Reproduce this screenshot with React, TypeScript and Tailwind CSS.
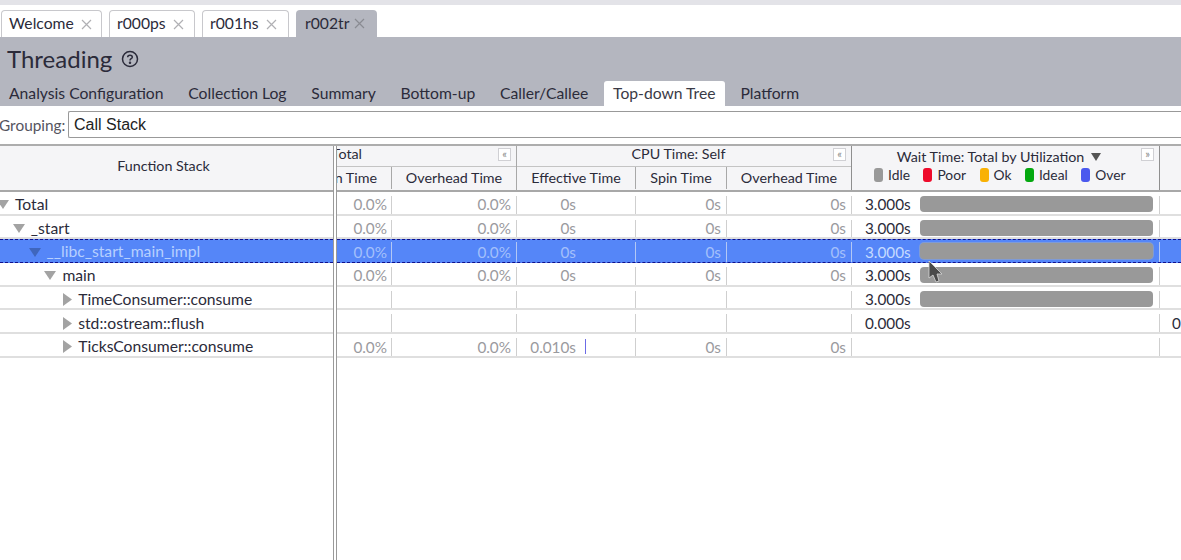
import { ReactNode } from "react";

const topTabs = [
  { label: "Welcome", width: "w-[101px]" },
  { label: "r000ps", width: "w-[86px]" },
  { label: "r001hs", width: "w-[87px]" },
];

const viewTabs = ["Analysis Configuration", "Collection Log", "Summary", "Bottom-up", "Caller/Callee", "Top-down Tree", "Platform"];

const legend = [
  { label: "Idle", color: "bg-[#999999]" },
  { label: "Poor", color: "bg-[#ee0b2b]" },
  { label: "Ok", color: "bg-[#f9b104]" },
  { label: "Ideal", color: "bg-[#04a80f]" },
  { label: "Over", color: "bg-[#4a58ee]" },
];

const rows = [
  { name: "Total", depth: 0, open: true, pct: true, eff: "0s", spin: "0s", over: "0s", wait: "3.000s", bar: true },
  { name: "_start", depth: 1, open: true, pct: true, eff: "0s", spin: "0s", over: "0s", wait: "3.000s", bar: true },
  { name: "__libc_start_main_impl", depth: 2, open: true, pct: true, eff: "0s", spin: "0s", over: "0s", wait: "3.000s", bar: true, selected: true },
  { name: "main", depth: 3, open: true, pct: true, eff: "0s", spin: "0s", over: "0s", wait: "3.000s", bar: true },
  { name: "TimeConsumer::consume", depth: 4, open: false, pct: false, eff: "", spin: "", over: "", wait: "3.000s", bar: true },
  { name: "std::ostream::flush", depth: 4, open: false, pct: false, eff: "", spin: "", over: "", wait: "0.000s", bar: false, next: "0" },
  { name: "TicksConsumer::consume", depth: 4, open: false, pct: true, eff: "0.010s", spin: "0s", over: "0s", wait: "", bar: false, tick: true },
];

function Tri({ open, selected }: { open: boolean; selected?: boolean }) {
  const fill = selected ? "#3f66bd" : "#a3a3a3";
  return open ? (
    <svg width="12" height="9" viewBox="0 0 12 9" className="shrink-0">
      <path d="M0 0H12L6 9Z" fill={fill} />
    </svg>
  ) : (
    <svg width="9" height="13" viewBox="0 0 9 13" className="shrink-0">
      <path d="M0 0L9 6.500L0 13Z" fill={fill} />
    </svg>
  );
}

function CloseX({ color }: { color: string }) {
  return (
    <svg width="11" height="11" viewBox="0 0 11 11" stroke={color} strokeWidth="1.200" className="shrink-0">
      <path d="M1 1L10 10M10 1L1 10" />
    </svg>
  );
}

function CollapseBtn({ dir }: { dir: string }) {
  return (
    <span className="absolute right-[5px] top-[2px] flex h-[13px] w-[13px] items-center justify-center border border-[#d0d0d4] bg-white pb-[2px] text-[11px] leading-none text-[#888888]">
      {dir}
    </span>
  );
}

function Cell({ className, children }: { className: string; children?: ReactNode }) {
  return <div className={`flex h-full shrink-0 items-center overflow-hidden ${className}`}>{children}</div>;
}

export default function App() {
  return (
    <div className="relative h-[560px] w-[1181px] overflow-hidden bg-white font-['Lato',sans-serif] text-[#2b2b3a]">
      <div className="h-[5px] bg-[#e3e3e8]" />

      {/* result tabs */}
      <div className="flex h-[32px] items-end gap-[7px] pl-[1px]">
        {topTabs.map((t) => (
          <div key={t.label} className={`flex h-[27px] items-center gap-[7px] rounded-t-[4px] border border-b-0 border-[#c8c8cc] bg-white pl-[7px] text-[15.700px] ${t.width}`}>
            {t.label}
            <CloseX color="#b0b0b4" />
          </div>
        ))}
        <div className="flex h-[27px] w-[81px] items-center gap-[5px] rounded-t-[4px] bg-[#b4b6bf] pl-[9px] text-[15.700px]">
          r002tr
          <CloseX color="#8a8b92" />
        </div>
      </div>

      {/* analysis header */}
      <div className="h-[69px] bg-[#b4b6bf]">
        <div className="flex h-[44px] items-center gap-[9px] pl-[7px]">
          <span className="text-[24px] leading-none">Threading</span>
          <svg width="18" height="18" viewBox="0 0 18 18" fill="none" stroke="#2b2b3a" strokeWidth="1.500">
            <circle cx="9" cy="9" r="7.500" />
            <path d="M6.700 7.200C6.700 4.700 11.300 4.700 11.300 7.200C11.300 8.800 9 8.700 9 10.500" />
            <circle cx="9" cy="12.800" r="0.500" />
          </svg>
        </div>
        <div className="flex h-[25px] items-end">
          {viewTabs.map((t) => (
            <div key={t} className={`mr-[6.800px] flex h-[25px] items-center rounded-t-[3px] px-[9px] text-[15.700px] ${t === "Top-down Tree" ? "bg-white text-[#3a3a46]" : ""}`}>
              {t}
            </div>
          ))}
        </div>
      </div>

      {/* grouping */}
      <div className="flex h-[38px] items-start pt-[5px]">
        <span className="ml-[-1px] mr-[3px] mt-[5px] w-[66px] shrink-0 text-[15.400px] leading-[18px] text-[#55555f]">Grouping:</span>
        <div className="flex h-[27px] flex-1 items-center rounded-l-[2px] border border-r-0 border-[#999999] pl-[5px] font-['Liberation_Sans',sans-serif] text-[16px] text-[#222222]">
          Call Stack
        </div>
      </div>

      <div className="flex h-[416px] border-t-2 border-[#adadad]">
        {/* function stack pane */}
        <div className="w-[333px] shrink-0">
          <div className="flex h-[46px] items-center justify-center border-b-2 border-[#a8a8a8] bg-[#f5f5f7] pb-[5px] pr-[6px] text-[14.300px]">
            Function Stack
          </div>
          {rows.map((r) => (
            <div key={r.name} className={`flex h-[23.700px] items-center overflow-hidden text-[15.700px] ${r.selected ? "border-y border-dashed border-[#10108c] bg-[#5586f8] pt-[2px] text-[#b7d0ff]" : "border-b-2 border-[#dfdfdf] pt-[4px]"}`}>
              <div className="flex w-[22px] shrink-0 justify-end pr-[5px]" style={{ marginLeft: r.depth * 15.8 - 8 }}>
                <Tri open={r.open} selected={r.selected} />
              </div>
              <span className="ml-[1px]">{r.name}</span>
            </div>
          ))}
        </div>

        {/* splitter */}
        <div className="w-[4px] shrink-0 border-x border-[#9a9a9a] bg-white" />

        {/* metrics pane */}
        <div className="min-w-0 flex-1 overflow-hidden">
          <div className="flex h-[46px] border-b-2 border-[#a8a8a8] bg-[#f5f5f7] text-[14.300px]">
            <div className="w-[179px] shrink-0">
              <div className="relative flex h-[21px] items-center border-b border-[#c4c4c4]">
                <div className="flex w-[25px] justify-end overflow-hidden pb-[4px]">
                  <span className="shrink-0 whitespace-nowrap">CPU Time: Total</span>
                </div>
                <CollapseBtn dir="«" />
              </div>
              <div className="flex h-[23px] pb-[1px]">
                <Cell className="w-[55px] justify-end border-r border-[#a8a8a8] pr-[14px]">
                  <span className="shrink-0 whitespace-nowrap">Spin Time</span>
                </Cell>
                <Cell className="w-[124px] justify-center">Overhead Time</Cell>
              </div>
            </div>
            <div className="w-[335px] shrink-0 border-l border-[#a8a8a8]">
              <div className="relative flex h-[21px] items-center justify-center border-b border-[#c4c4c4] pb-[4px] pr-[11px]">
                CPU Time: Self
                <CollapseBtn dir="«" />
              </div>
              <div className="flex h-[23px] pb-[1px]">
                <Cell className="w-[119px] justify-center border-r border-[#a8a8a8]">Effective Time</Cell>
                <Cell className="w-[91px] justify-center border-r border-[#a8a8a8]">Spin Time</Cell>
                <Cell className="flex-1 justify-center">Overhead Time</Cell>
              </div>
            </div>
            <div className="relative w-[309px] shrink-0 border-x border-[#8f8f8f] pt-[1px]">
              <div className="flex h-[19px] items-center justify-center pr-[13px]">
                Wait Time: Total by Utilization
                <svg width="10" height="8" viewBox="0 0 10 8" className="ml-[7px]">
                  <path d="M0 0H10L5 8Z" fill="#555555" />
                </svg>
              </div>
              <div className="flex h-[18px] items-center gap-[13.500px] pl-[22px] text-[13.800px]">
                {legend.map((l) => (
                  <div key={l.label} className="flex items-center gap-[5px]">
                    <span className={`h-[14px] w-[9px] rounded-[3px] ${l.color}`} />
                    {l.label}
                  </div>
                ))}
              </div>
              <CollapseBtn dir="»" />
            </div>
          </div>

          {rows.map((r) => {
            const rowTone = r.selected ? "border-y border-dashed border-[#10108c] bg-[#5586f8] pt-[2px]" : "border-b-2 border-[#dfdfdf] pt-[4px]";
            const num = r.selected ? "text-[#a4c0fb]" : "text-[#9a9a9e]";
            const line = r.selected ? "border-r border-[#b3c8f5]" : "border-r border-[#cfcfcf]";
            return (
              <div key={r.name} className={`flex h-[23.700px] items-center text-[15.300px] ${rowTone} ${num}`}>
                <Cell className={`w-[55px] justify-end pr-[4px] ${line}`}>{r.pct ? "0.0%" : ""}</Cell>
                <Cell className={`w-[125px] justify-end pr-[5px] ${line}`}>{r.pct ? "0.0%" : ""}</Cell>
                <Cell className={`w-[119px] ${line}`}>
                  <span className="w-[59px] shrink-0 text-right">{r.eff}</span>
                  {r.tick && <span className="ml-[9px] h-[15px] w-[1px] bg-[#6b6be6]" />}
                </Cell>
                <Cell className={`w-[91px] justify-end pr-[5px] ${line}`}>{r.spin}</Cell>
                <Cell className={`w-[125px] justify-end pr-[5px] ${line}`}>{r.over}</Cell>
                <Cell className={`w-[308px] border-r pl-[13px] ${r.selected ? "border-[#b3c8f5] text-[#c6dbff]" : "border-[#cfcfcf] text-[#2b2b3a]"}`}>
                  <span className="w-[55px] shrink-0">{r.wait}</span>
                  {r.bar && <span className={`mb-[2px] h-[16px] w-[233px] rounded-[4px] bg-[#999999] ${r.selected ? "ring-1 ring-[#7f9bd6]" : ""}`} />}
                </Cell>
                <Cell className="flex-1 pl-[12px] text-[#2b2b3a]">{r.next}</Cell>
              </div>
            );
          })}
        </div>
      </div>

      {/* mouse pointer */}
      <svg width="16" height="24" viewBox="0 0 16 24" className="absolute left-[928px] top-[260px]">
        <path d="M1 1V18L5 15L8 22L11 21L9 14H14Z" fill="#4a4a4a" stroke="#d8d8d8" strokeWidth="0.800" />
      </svg>
    </div>
  );
}
